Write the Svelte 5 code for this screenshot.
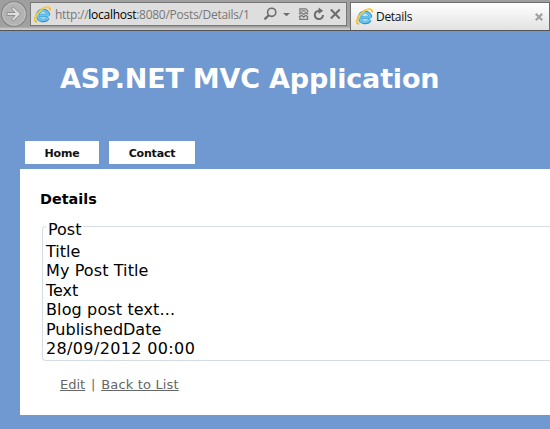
<script>
  const fields = [
    { label: 'Title', value: 'My Post Title', kind: 'title' },
    { label: 'Text', value: 'Blog post text...', kind: 'body' },
    { label: 'PublishedDate', value: '28/09/2012 00:00', kind: 'date' }
  ];
</script>

{#snippet explorerLogo()}
  <svg class="logo" width="17" height="17" viewBox="0 0 16 16">
    <path d="M5 9h8.6M13.2 11.3C11.2 15 3.5 14.6 3.4 9C3.2 2.6 13.4 2.2 13.6 9" fill="none" stroke="#3194ce" stroke-width="3.3" />
    <path d="M5 8.9h8.5M12.9 11.3C10.8 14.1 3.9 14 3.6 9C3.5 3.3 13 2.8 13.4 8.7" fill="none" stroke="#6cc5ee" stroke-width="2.1" />
    <path d="M3 14.9C-.8 15 .8 8.6 5.6 4.2C10.2.4 15.8-.4 15 4.2" fill="none" stroke="#f1ba1d" stroke-width="1.7" />
    <path d="M1.5 13.4C.9 10.8 4 6.2 7.2 3.6C10.7.9 14 .3 14.7 2.1" fill="none" stroke="#ffe45b" stroke-width=".8" />
  </svg>
{/snippet}

<div class="window">
  <div class="chrome">
    <svg class="forward" width="28" height="28" viewBox="0 0 28 28">
      <circle cx="14" cy="14" r="12.4" fill="#b3b3b3" stroke="#858585" stroke-width="1.2" />
      <circle cx="14" cy="14" r="11.3" fill="none" stroke="#c4c4c4" />
      <path d="M7 12.5h8l-3.4-3.6 1.7-1.9 7.4 7-7.4 7-1.7-1.9 3.4-3.6H7z" fill="#dedede" stroke="#8e8e8e" />
    </svg>
    <div class="address">
      {@render explorerLogo()}
      <span class="url">http://<b>localhost</b>:8080/Posts/Details/1</span>
      <svg class="tools" width="80" height="16" viewBox="0 0 80 16">
        <g fill="none" stroke="#6d6d6d">
          <circle cx="9.7" cy="6.3" r="4.1" stroke-width="1.6" />
          <path d="M6.8 9.2L2.5 13.4" stroke-width="2.2" />
          <path d="M57.3 4.9A4.1 4.1 0 1 0 61 9" stroke-width="2" />
          <path d="M68.9 3.6l8.8 8.8M77.7 3.6l-8.8 8.8" stroke-width="2.1" />
        </g>
        <path d="M21 7h7l-3.5 3.2zM56.6 1.5l4.6 3.3-4.6 3.3z" fill="#6d6d6d" />
        <path d="M37.9 6.6V2.8h6l1.6 1.6v2.2M37.9 10.6v2.7h7.6v-2.7M37 8.3l2.4-1.7 2.2 1.8 2.2-1.8 2.3 1.7M37 11l2.4-1.7 2.2 1.8 2.2-1.8 2.3 1.7M39.4 4.8h4" fill="none" stroke="#777" stroke-width="1.3" />
      </svg>
    </div>
    <div class="tab">
      {@render explorerLogo()}
      <span class="tab-title">Details</span>
      <svg class="close" width="8" height="8" viewBox="0 0 8 8"><path d="M.8.8l6.4 6.4M7.2.8L.8 7.2" stroke="#a0a0a0" stroke-width="2.2" /></svg>
    </div>
  </div>
  <div class="page">
    <header><h1>ASP.NET MVC Application</h1></header>
    <nav><a class="home" href="#home">Home</a><a class="contact" href="#contact">Contact</a></nav>
    <main>
      <h2>Details</h2>
      <section class="post">
        <div class="legend"><span>Post</span></div>
        {#each fields as { label, value, kind }}
          <div>{label}</div>
          <div class={kind}>{value}</div>
        {/each}
      </section>
      <p><a href="#edit">Edit</a><span class="divider">|</span><a class="back" href="#list">Back to List</a></p>
    </main>
  </div>
</div>

<style>
  :global(body) { margin: 0; overflow: hidden; }
  .window { width: 550px; height: 429px; overflow: hidden; display: flex; flex-direction: column; font-family: "DejaVu Sans", Verdana, sans-serif; }
  .chrome { height: 31px; box-sizing: border-box; flex: none; display: flex; align-items: flex-start; background: linear-gradient(#9f9f9f, #a1a1a1 27px, #c0c0c0 28px, #d0d0d0 30px); border-bottom: 1px solid #555; }
  .forward { flex: none; }
  .address { margin: 2px 0 0 2px; width: 317px; height: 24px; box-sizing: border-box; border: 1px solid #777; background: #dedede; display: flex; align-items: center; padding-left: 3px; }
  .logo { flex: none; }
  .url { font: 12px "Open Sans", sans-serif; letter-spacing: -.27px; color: #777; white-space: pre; margin-left: 4px; width: 202px; flex: none; }
  .url b { font-weight: 400; color: #000; }
  .tools { flex: none; margin-left: 5px; }
  .tab { margin: 2px 0 0 3px; width: 200px; height: 28px; box-sizing: border-box; border: 1px solid #6e6e6e; border-bottom: 0; background: linear-gradient(#fff, #e2e2e2); display: flex; align-items: center; padding: 0 6px 0 5px; }
  .tab-title { font: 12px "Open Sans", sans-serif; letter-spacing: -.3px; color: #111; margin-left: 3px; }
  .close { margin-left: auto; }
  .page { flex: 1; background: #7099d2; padding-left: 20px; }
  header { height: 110px; box-sizing: border-box; padding: 31px 0 0 40px; }
  h1 { margin: 0; color: #fff; font-size: 27px; letter-spacing: -.18px; line-height: 34px; font-weight: 700; white-space: nowrap; }
  nav { height: 28px; display: flex; gap: 10px; padding-left: 5px; }
  nav a { height: 23px; line-height: 25px; text-align: center; background: #fff; color: #111; text-decoration: none; font-size: 11px; letter-spacing: -.2px; font-weight: 700; }
  .home { width: 74px; }
  .contact { width: 86px; }
  main { height: 246px; box-sizing: border-box; background: #fff; padding: 21px 0 0 20px; color: #000; }
  h2 { margin: 0; font-size: 14.4px; line-height: 19px; }
  .post { margin: 17px 0 0 2px; height: 135px; box-sizing: border-box; border: 1px solid #d3dde6; border-right: 0; border-radius: 4px 0 0 4px; padding-left: 3px; font-size: 16px; line-height: 19.45px; white-space: nowrap; }
  .legend { height: 19px; margin-top: -7px; margin-bottom: 3px; }
  .legend span { background: #fff; padding: 0 2px; }
  .title { letter-spacing: .1px; }
  .body { letter-spacing: .13px; }
  .date { letter-spacing: .36px; }
  p { margin: 14px 0 0 20px; font-size: 13px; line-height: 20px; color: #666; display: flex; }
  p a { color: #666; text-underline-offset: 1px; }
  .back { letter-spacing: .17px; }
  .divider { width: 16px; text-align: center; }
</style>
